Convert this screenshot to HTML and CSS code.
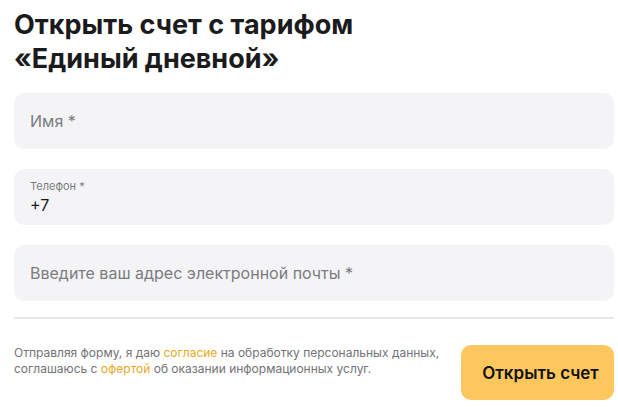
FILE: index.html
```html
<!DOCTYPE html>
<html lang="ru">
<head>
<meta charset="utf-8">
<link rel="stylesheet" href="styles.css">
</head>
<body>
<div class="page">
  <h1 class="title">Открыть счет с тарифом<br>«Единый дневной»</h1>
  <form class="form">
    <div class="field"><span class="placeholder">Имя *</span></div>
    <div class="field field-filled">
      <span class="label">Телефон *</span>
      <span class="value">+7</span>
    </div>
    <div class="field"><span class="placeholder">Введите ваш адрес электронной почты *</span></div>
    <div class="divider"></div>
    <div class="footer">
      <p class="legal">Отправляя форму, я даю <a class="link">согласие</a> на обработку персональных данных,<br>соглашаюсь с <a class="link">офертой</a> об оказании информационных услуг.</p>
      <button type="button" class="submit">Открыть счет</button>
    </div>
  </form>
</div>
</body>
</html>
```

FILE: styles.css
```css
* { box-sizing: border-box; }
html, body { margin: 0; padding: 0; background: #fff; }
body { font-family: Inter, "Noto Sans", sans-serif; color: #1c1c1e; }
.page { padding: 8px 4px 0 14px; }
.title {
  margin: 0 0 17px;
  font-size: 27px;
  line-height: 34px;
  font-weight: 700;
  color: #1b1b1d;
}
.form { display: flex; flex-direction: column; }
.field {
  height: 56px;
  background: #f4f4f6;
  border-radius: 10px;
  padding: 0 16px;
  display: flex;
  flex-direction: column;
  justify-content: center;
  margin-bottom: 20px;
}
.placeholder { font-size: 16px; color: #7b7b80; }
.field-filled { justify-content: center; gap: 3px; }
.label { font-size: 11px; color: #7b7b80; line-height: 13px; }
.value { font-size: 16px; color: #1c1c1e; line-height: 19px; }
.divider { height: 2px; background: #e8e8ea; margin-top: -4px; }
.footer {
  display: flex;
  align-items: flex-start;
  justify-content: space-between;
  margin-top: 26px;
}
.legal {
  margin: 0;
  font-size: 12px;
  line-height: 16px;
  color: #727277;
}
.link { color: #e7a823; text-decoration: none; }
.submit {
  width: 153px;
  height: 55px;
  border: 0;
  border-radius: 10px;
  padding: 0 0 0 6px;
  background: #fdc75e;
  font-family: Inter, sans-serif;
  font-size: 17px;
  font-weight: 600;
  color: #111;
}
```
